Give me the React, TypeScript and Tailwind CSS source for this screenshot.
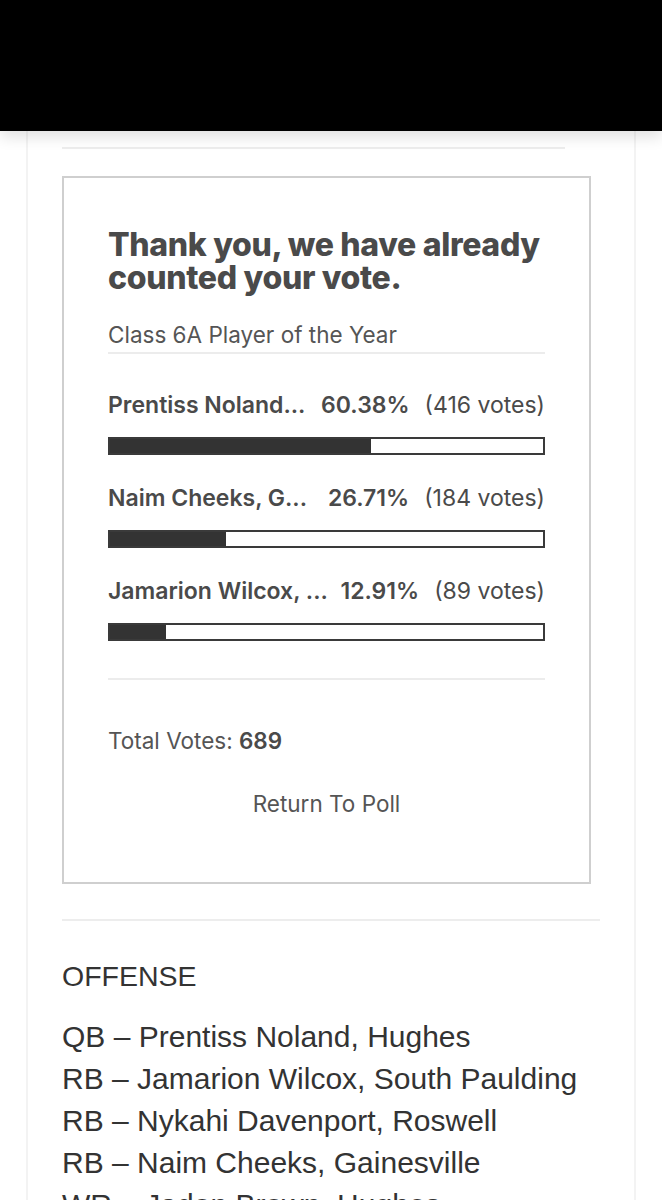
import React from 'react';

interface PollOption {
  label: string;
  percent: number;
  votes: number;
}

const options: PollOption[] = [
  { label: 'Prentiss Noland...', percent: 60.38, votes: 416 },
  { label: 'Naim Cheeks, G...', percent: 26.71, votes: 184 },
  { label: 'Jamarion Wilcox, ...', percent: 12.91, votes: 89 },
];

const offense = [
  'QB – Prentiss Noland, Hughes',
  'RB – Jamarion Wilcox, South Paulding',
  'RB – Nykahi Davenport, Roswell',
  'RB – Naim Cheeks, Gainesville',
  'WR – Jadon Brown, Hughes',
];

function ResultRow({ option }: { option: PollOption }) {
  return (
    <div className="flex flex-col">
      <div className="flex items-baseline justify-between whitespace-nowrap text-[23px] leading-[28px] text-[#4a4a4a]">
        <span className="font-semibold">{option.label}</span>
        <span className="flex items-baseline gap-[15px]">
          <span className="font-semibold">{option.percent.toFixed(2)}%</span>
          <span>({option.votes} votes)</span>
        </span>
      </div>
      <div className="mt-[18px] h-[18px] border-2 border-[#3a3a3a] bg-white">
        <div className="h-full bg-[#333333]" style={{ width: `${option.percent}%` }} />
      </div>
    </div>
  );
}

export default function App() {
  return (
    <div className="min-h-[1200px] bg-white" style={{ fontFamily: 'Inter, "Noto Sans", sans-serif' }}>
      <div className="h-[131px] bg-black shadow-[0_6px_14px_rgba(0,0,0,0.12)] relative z-10" />

      <div className="mx-[26px] border-x-2 border-[#f3f3f3] px-[34px] pt-[16px]">
        <div className="w-[503px] border-t-2 border-[#ededed]" />

        <div className="mt-[27px] w-[529px] border-2 border-[#cfcfcf] px-[44px] pt-[50px] pb-[64px]">
          <h2 className="text-[32px] leading-[33px] font-extrabold tracking-[-0.01em] text-[#4a4a4a]">
            Thank you, we have already counted your vote.
          </h2>

          <div className="mt-[26px] border-b-2 border-[#ececec] pb-[3px] text-[22.5px] leading-[29px] text-[#555]">
            Class 6A Player of the Year
          </div>

          <div className="mt-[37px] flex flex-col gap-[29px]">
            {options.map((option) => (
              <ResultRow key={option.label} option={option} />
            ))}
          </div>

          <div className="mt-[37px] border-t-2 border-[#ececec]" />

          <div className="mt-[47px] text-[22.5px] leading-[28px] text-[#555]">
            Total Votes: <span className="font-semibold text-[#4a4a4a]">689</span>
          </div>

          <div className="mt-[35px] text-center text-[22.5px] leading-[28px] text-[#555]">Return To Poll</div>
        </div>

        <div className="mt-[35px] w-[538px] border-t-2 border-[#ededed]" />

        <div
          className="pt-[34px] leading-[42px] text-[#333]"
          style={{ fontFamily: '"Liberation Sans", Arial, sans-serif' }}
        >
          <p className="text-[28.5px]">OFFENSE</p>
          <ul className="mt-[19px] text-[30px]">
            {offense.map((line) => (
              <li key={line}>{line}</li>
            ))}
          </ul>
        </div>
      </div>
    </div>
  );
}
